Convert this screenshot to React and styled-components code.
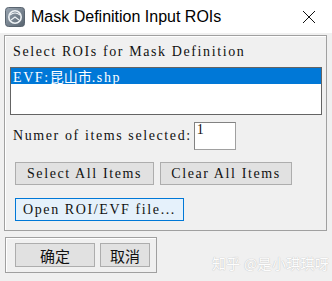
import React from 'react';
import styled, { createGlobalStyle } from 'styled-components';

const Global = createGlobalStyle`
  html, body { margin: 0; padding: 0; background: #f0f0f0; }
`;

const Window = styled.div`
  width: 332px;
  height: 281px;
  overflow: hidden;
  position: relative;
  background: #f0f0f0;
  font-family: "Liberation Serif", "Noto Sans CJK SC", serif;
  font-size: 14px;
  letter-spacing: 1.6px;
  color: #111;
`;

const TitleBar = styled.div`
  height: 33px;
  background: #fff;
  display: flex;
  align-items: center;
  padding-left: 5px;
`;

const Title = styled.span`
  font-family: "Liberation Sans", "Noto Sans", sans-serif;
  font-size: 16px;
  letter-spacing: 0;
  margin-left: 6px;
  flex: 1;
  color: #000;
`;

const Close = styled.div`
  width: 46px;
  height: 33px;
  display: flex;
  align-items: center;
  justify-content: center;
`;

const Body = styled.div`
  padding: 2px 5px 0 4px;
`;

const Frame = styled.div`
  border: 1px solid #a0a0a0;
  box-shadow: inset 1px 1px 0 #fff;
  display: flex;
  flex-direction: column;
  align-items: flex-start;
  padding: ${p => p.$pad};
  width: ${p => p.$w || 'auto'};
  box-sizing: border-box;
  margin: ${p => p.$m || 0};
`;

const Label = styled.div`
  line-height: 16px;
  margin: 8px 0 0 8px;
  white-space: pre;
`;

const ListBox = styled.div`
  align-self: stretch;
  margin: 7px 4px 0 5px;
  height: 48px;
  box-sizing: border-box;
  border: 1px solid #646464;
  background: #fff;
`;

const ListItem = styled.div`
  height: 16px;
  line-height: 16px;
  padding-left: 2px;
  background: ${p => (p.$selected ? '#0078d7' : 'transparent')};
  color: ${p => (p.$selected ? '#fff' : '#000')};
  white-space: pre;
`;

const Cjk = styled.span`
  font-family: "Noto Sans CJK SC", sans-serif;
  font-size: 14px;
  letter-spacing: 0;
`;

const CountRow = styled.div`
  display: flex;
  align-items: center;
  margin: 7px 0 0 8px;
`;

const CountBox = styled.div`
  width: 42px;
  height: 28px;
  box-sizing: border-box;
  border: 1px solid #a0a0a0;
  border-top-color: #828282;
  border-left-color: #828282;
  background: #fff;
  margin-left: 2px;
  padding: 0 0 0 2px;
  line-height: 14px;
`;

const ButtonRow = styled.div`
  display: flex;
  gap: ${p => p.$gap || 6}px;
  margin: ${p => p.$m};
`;

const Button = styled.div`
  width: ${p => p.$w}px;
  height: ${p => p.$h || 23}px;
  box-sizing: border-box;
  border: 1px solid ${p => (p.$focus ? '#0078d7' : '#adadad')};
  background: ${p => (p.$focus ? '#e5f1fb' : '#e1e1e1')};
  display: flex;
  align-items: center;
  justify-content: center;
  white-space: pre;
  font-family: ${p => (p.$cjk ? '"Noto Sans CJK SC", sans-serif' : 'inherit')};
  font-size: ${p => (p.$cjk ? '15px' : 'inherit')};
  letter-spacing: ${p => (p.$cjk ? '0' : 'inherit')};
`;

const Watermark = styled.div`
  position: absolute;
  left: 212px;
  top: 253px;
  font-family: "Noto Sans CJK SC", sans-serif;
  font-size: 14px;
  letter-spacing: 0.3px;
  color: #fdfdfd;
  text-shadow: 0 0 1px #c4c4c4, 0 0 1px #c4c4c4;
`;

const AppIcon = () => (
  <svg width="20" height="20" viewBox="0 0 20 20">
    <defs>
      <linearGradient id="ig" x1="0" y1="0" x2="1" y2="1">
        <stop offset="0" stopColor="#9aa6b2" />
        <stop offset="1" stopColor="#56626e" />
      </linearGradient>
    </defs>
    <rect x="0.5" y="0.5" width="19" height="19" rx="3" fill="url(#ig)" stroke="#5a6570" />
    <circle cx="10" cy="10" r="6.2" fill="none" stroke="#eef2f5" strokeWidth="1.6" />
    <path d="M5 8 Q10 4 15 8" fill="none" stroke="#eef2f5" strokeWidth="1.2" />
    <path d="M6 13 L10 10 L14 13" fill="none" stroke="#eef2f5" strokeWidth="1.1" />
  </svg>
);

export default function App() {
  return (
    <Window>
      <Global />
      <TitleBar>
        <AppIcon />
        <Title>Mask Definition Input ROIs</Title>
        <Close>
          <svg width="14" height="14" viewBox="0 0 14 14">
            <path d="M1 1 L13 13 M13 1 L1 13" stroke="#111" strokeWidth="1" />
          </svg>
        </Close>
      </TitleBar>
      <Body>
        <Frame $pad="0 0 9px 0">
          <Label>Select ROIs for Mask Definition</Label>
          <ListBox>
            <ListItem $selected>EVF:<Cjk>昆山市</Cjk>.shp</ListItem>
          </ListBox>
          <CountRow>
            <span>Numer of items selected:</span>
            <CountBox>1</CountBox>
          </CountRow>
          <ButtonRow $m="12px 0 0 10px">
            <Button $w={139}>Select All Items</Button>
            <Button $w={132}>Clear All Items</Button>
          </ButtonRow>
          <ButtonRow $m="13px 0 0 10px">
            <Button $w={169} $focus>Open ROI/EVF file...</Button>
          </ButtonRow>
        </Frame>
        <Frame $pad="5px 0 5px 9px" $w="152px" $m="6px 0 0 1px">
          <ButtonRow $m="0" $gap={5}>
            <Button $w={80} $h={24} $cjk>确定</Button>
            <Button $w={50} $h={24} $cjk>取消</Button>
          </ButtonRow>
        </Frame>
      </Body>
      <Watermark>知乎 @是小琪琪呀</Watermark>
    </Window>
  );
}
